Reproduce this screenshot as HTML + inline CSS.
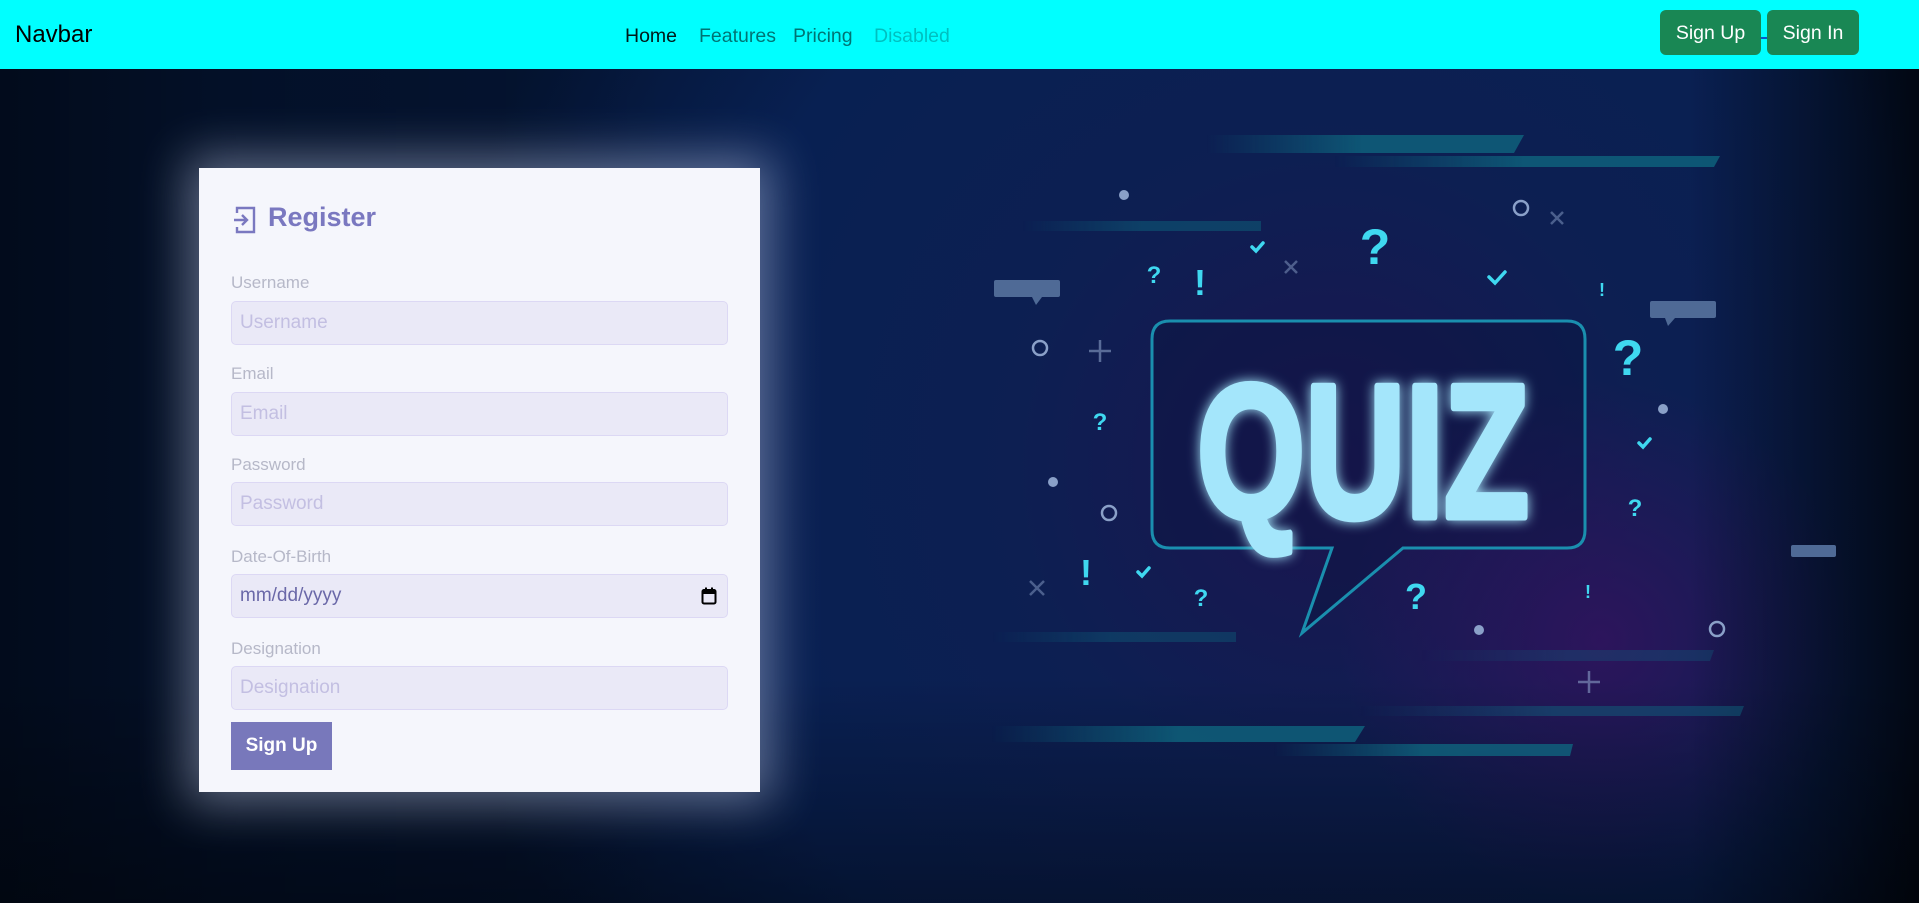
<!DOCTYPE html>
<html><head><meta charset="utf-8">
<style>
*{box-sizing:border-box;margin:0;padding:0}
body{width:1919px;height:903px;overflow:hidden;font-family:"Liberation Sans",sans-serif;background:#03102a;position:relative}
#bg{position:absolute;left:0;top:0}
nav{position:absolute;left:0;top:0;width:1919px;height:69px;background:#00ffff;z-index:3}
.brand{position:absolute;left:15px;top:21px;font-size:24px;color:#000}
.nl{position:absolute;top:25px;font-size:19.5px}
.btn{position:absolute;top:10px;height:45px;background:#198754;color:#fff;font-size:19.5px;border-radius:6px;line-height:47px;text-align:center}
.card{position:absolute;left:199px;top:168px;width:561px;height:624px;background:#f5f6fc;box-shadow:0 0 45px 12px rgba(200,210,240,.45);z-index:2}
.title{position:absolute;left:35px;top:34px;font-size:27px;font-weight:bold;color:#7a78c0}
.lbl{position:absolute;left:32px;font-size:17px;color:#b6b8c8}
.inp{position:absolute;left:32px;width:497px;height:44px;background:#eae9f7;border:1px solid #dcd8f4;border-radius:5px;padding-left:8px;line-height:42px;font-size:19px;color:#c3bfe2}
.sub{position:absolute;left:32px;top:554px;width:101px;height:48px;background:#7878bb;color:#fff;font-weight:bold;font-size:19px;line-height:48px;text-align:center}
</style></head><body>
<svg id="bg" width="1919" height="903" viewBox="0 0 1919 903">
<defs>
<radialGradient id="g1" cx="1330" cy="470" r="900" gradientUnits="userSpaceOnUse">
<stop offset="0" stop-color="#1c1550"/><stop offset=".35" stop-color="#0d1f52"/><stop offset=".7" stop-color="#082052"/><stop offset="1" stop-color="#041432"/></radialGradient>
<linearGradient id="lx" x1="0" x2="1" y1="0" y2="0"><stop offset="0" stop-color="#000" stop-opacity=".45"/><stop offset=".12" stop-color="#000" stop-opacity=".2"/><stop offset=".35" stop-color="#000" stop-opacity="0"/><stop offset=".88" stop-color="#000" stop-opacity="0"/><stop offset="1" stop-color="#000" stop-opacity=".75"/></linearGradient>
<linearGradient id="ly" x1="0" x2="0" y1="0" y2="1"><stop offset=".75" stop-color="#000" stop-opacity="0"/><stop offset="1" stop-color="#000" stop-opacity=".4"/></linearGradient>
<radialGradient id="pp" cx="1600" cy="640" r="260" gradientUnits="userSpaceOnUse"><stop offset="0" stop-color="#3a1060" stop-opacity=".7"/><stop offset="1" stop-color="#3a1060" stop-opacity="0"/></radialGradient>
<linearGradient id="st" x1="0" x2="1"><stop offset="0" stop-color="#0d6a80" stop-opacity="0"/><stop offset=".5" stop-color="#0f6a82"/><stop offset="1" stop-color="#0f6a82"/></linearGradient>
<filter id="gl" x="-20%" y="-20%" width="140%" height="140%"><feGaussianBlur stdDeviation="6" result="b"/><feMerge><feMergeNode in="b"/><feMergeNode in="SourceGraphic"/></feMerge></filter>
</defs>
<rect width="1919" height="903" fill="url(#g1)"/>
<rect width="1919" height="903" fill="url(#pp)"/>
<rect width="1919" height="903" fill="url(#lx)"/>
<rect width="1919" height="903" fill="url(#ly)"/>
<g fill="url(#st)" opacity=".75">
<polygon points="1206,135 1524,135 1514,153 1206,153"/>
<polygon points="1334,156 1720,156 1714,167 1334,167"/>
<polygon points="1022,221 1261,221 1261,231 1022,231" opacity=".6"/>
<polygon points="991,632 1236,632 1236,642 991,642" opacity=".5"/>
<polygon points="991,726 1365,726 1355,742 991,742"/>
<polygon points="1359,706 1744,706 1740,716 1359,716" opacity=".6"/>
<polygon points="1273,744 1573,744 1570,756 1273,756"/>
<polygon points="1420,650 1714,650 1710,661 1420,661" opacity=".4"/>
</g>
<g fill="#4f6a96"><rect x="994" y="280" width="66" height="17" rx="2"/><polygon points="1032,297 1042,297 1036,305"/>
<rect x="1650" y="301" width="66" height="17" rx="2"/><polygon points="1665,318 1675,318 1668,326"/>
<rect x="1791" y="545" width="45" height="12" rx="2"/></g>
<path d="M1170,321 H1567 Q1585,321 1585,339 V530 Q1585,548 1567,548 H1403 L1302,633 L1332,548 H1170 Q1152,548 1152,530 V339 Q1152,321 1170,321 Z" fill="rgba(10,20,60,.35)" stroke="#1a8fae" stroke-width="3"/>
<text x="1197" y="517" font-family="Liberation Sans" font-weight="bold" font-size="190" fill="#a4e6fb" stroke="#a4e6fb" stroke-width="7" stroke-linejoin="round" textLength="332" lengthAdjust="spacingAndGlyphs" filter="url(#gl)">QUIZ</text>
<g font-family="Liberation Sans" font-weight="bold" fill="#3fd8f0" text-anchor="middle">
<text x="1154" y="283" font-size="24">?</text>
<text x="1375" y="264" font-size="50">?</text>
<text x="1628" y="375" font-size="50">?</text>
<text x="1100" y="430" font-size="24">?</text>
<text x="1635" y="516" font-size="24">?</text>
<text x="1201" y="606" font-size="24">?</text>
<text x="1416" y="609" font-size="36">?</text>
<text x="1200" y="295" font-size="36">!</text>
<text x="1086" y="585" font-size="36">!</text>
<text x="1602" y="296" font-size="18">!</text>
<text x="1588" y="598" font-size="18">!</text>
</g>
<g stroke="#3fd8f0" stroke-width="3.5" fill="none" stroke-linecap="round">
<path d="M1252,247 l4,4 l7,-8"/><path d="M1489,277 l6,6 l10,-11"/><path d="M1639,443 l4,4 l7,-8"/><path d="M1138,572 l4,4 l7,-8"/></g>
<g fill="#8aa0c8"><circle cx="1124" cy="195" r="5"/><circle cx="1663" cy="409" r="5"/><circle cx="1053" cy="482" r="5"/><circle cx="1479" cy="630" r="5"/></g>
<g stroke="#8aa0c8" stroke-width="2.5" fill="none"><circle cx="1521" cy="208" r="7"/><circle cx="1040" cy="348" r="7"/><circle cx="1109" cy="513" r="7"/><circle cx="1717" cy="629" r="7"/>
<path d="M1100,340 v22 M1089,351 h22 M1589,671 v22 M1578,682 h22" opacity=".6"/>
<path d="M1285,261 l12,12 M1297,261 l-12,12 M1551,212 l12,12 M1563,212 l-12,12 M1030,581 l14,14 M1044,581 l-14,14" opacity=".5"/></g>
</svg>
<nav>
<div class="brand">Navbar</div>
<div class="nl" style="left:625px;color:rgba(0,0,0,.9)">Home</div>
<div class="nl" style="left:699px;color:rgba(0,0,0,.55)">Features</div>
<div class="nl" style="left:793px;color:rgba(0,0,0,.55)">Pricing</div>
<div class="nl" style="left:874px;color:rgba(0,0,0,.25)">Disabled</div>
<div class="btn" style="left:1660px;width:101px">Sign Up</div>
<div style="position:absolute;left:1761px;top:37px;width:6px;height:2px;background:#0a58ca"></div>
<div class="btn" style="left:1767px;width:92px">Sign In</div>
</nav>
<div class="card">
<svg style="position:absolute;left:34px;top:38px" width="24" height="28" viewBox="0 0 24 28" fill="none" stroke="#7a78c0" stroke-width="2.4"><path d="M4,7 V2 H21 V26 H4 V21"/><path d="M1,14 H14 M9,9 L14,14 L9,19"/></svg>
<div class="title" style="left:69px">Register</div>
<div class="lbl" style="top:105px">Username</div>
<div class="inp" style="top:133px">Username</div>
<div class="lbl" style="top:196px">Email</div>
<div class="inp" style="top:224px">Email</div>
<div class="lbl" style="top:287px">Password</div>
<div class="inp" style="top:314px">Password</div>
<div class="lbl" style="top:379px">Date-Of-Birth</div>
<div class="inp" style="top:406px;color:#6a68a8">mm/dd/yyyy
<svg style="position:absolute;right:10px;top:12px" width="16" height="18" viewBox="0 0 16 18"><rect x="1.5" y="3" width="13" height="13.5" rx="1.5" fill="none" stroke="#000" stroke-width="2"/><rect x="1.5" y="3" width="13" height="4" fill="#000"/><rect x="4" y="0.5" width="2" height="3" fill="#000"/><rect x="10" y="0.5" width="2" height="3" fill="#000"/></svg></div>
<div class="lbl" style="top:471px">Designation</div>
<div class="inp" style="top:498px">Designation</div>
<div class="sub">Sign Up</div>
</div>
</body></html>
